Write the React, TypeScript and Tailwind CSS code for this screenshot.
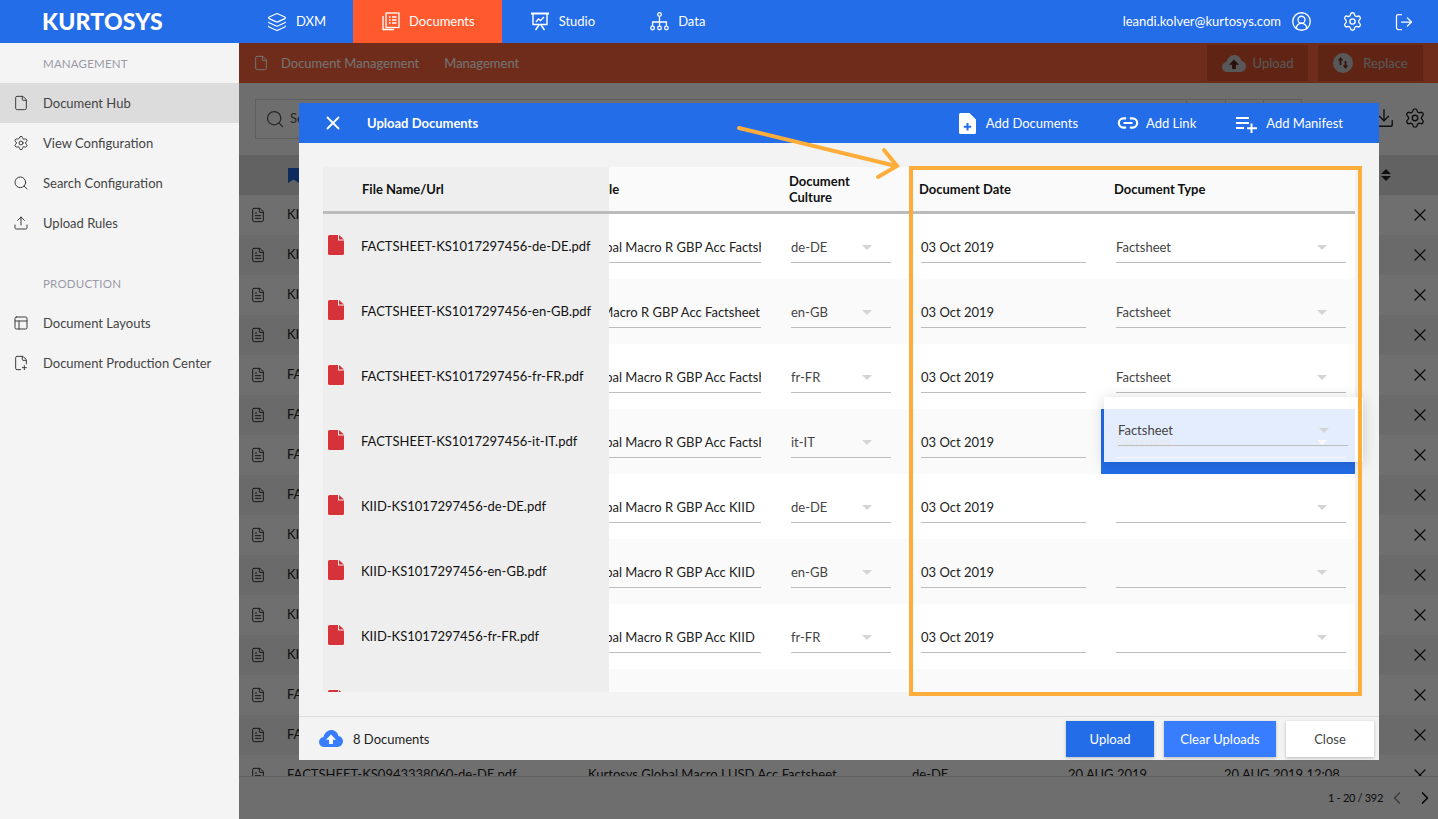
import {
  ChevronLeft,
  ChevronRight,
  CircleUserRound,
  Download,
  File,
  FilePlus2,
  FileText,
  Layers,
  Link2,
  LogOut,
  PanelsTopLeft,
  Search,
  Settings,
  Upload,
  X,
} from "lucide-react";

type DocRow = {
  file: string;
  title: string;
  titleClass: string;
  culture: string;
  type: string;
};

const docs: DocRow[] = [
  { file: "FACTSHEET-KS1017297456-de-DE.pdf", title: "Kurtosys Global Macro R GBP Acc Factsheet", titleClass: "-ml-[77px]", culture: "de-DE", type: "Factsheet" },
  { file: "FACTSHEET-KS1017297456-en-GB.pdf", title: "Kurtosys Global Macro R GBP Acc Factsheet", titleClass: "-ml-[101px]", culture: "en-GB", type: "Factsheet" },
  { file: "FACTSHEET-KS1017297456-fr-FR.pdf", title: "Kurtosys Global Macro R GBP Acc Factsheet", titleClass: "-ml-[77px]", culture: "fr-FR", type: "Factsheet" },
  { file: "FACTSHEET-KS1017297456-it-IT.pdf", title: "Kurtosys Global Macro R GBP Acc Factsheet", titleClass: "-ml-[77px]", culture: "it-IT", type: "Factsheet" },
  { file: "KIID-KS1017297456-de-DE.pdf", title: "Kurtosys Global Macro R GBP Acc KIID", titleClass: "-ml-[77px]", culture: "de-DE", type: "" },
  { file: "KIID-KS1017297456-en-GB.pdf", title: "Kurtosys Global Macro R GBP Acc KIID", titleClass: "-ml-[77px]", culture: "en-GB", type: "" },
  { file: "KIID-KS1017297456-fr-FR.pdf", title: "Kurtosys Global Macro R GBP Acc KIID", titleClass: "-ml-[77px]", culture: "fr-FR", type: "" },
  { file: "KIID-KS1017297456-it-IT.pdf", title: "Kurtosys Global Macro R GBP Acc KIID", titleClass: "-ml-[77px]", culture: "it-IT", type: "" },
];

const backgroundRows = [
  "KIID-KS0943338060-de-DE.pdf",
  "KIID-KS0943338060-en-GB.pdf",
  "KIID-KS0943338060-fr-FR.pdf",
  "KIID-KS0943338060-it-IT.pdf",
  "FACTSHEET-KS0943338061-de-DE.pdf",
  "FACTSHEET-KS0943338061-en-GB.pdf",
  "FACTSHEET-KS0943338061-fr-FR.pdf",
  "FACTSHEET-KS0943338061-it-IT.pdf",
  "KIID-KS0943338061-de-DE.pdf",
  "KIID-KS0943338061-en-GB.pdf",
  "KIID-KS0943338061-fr-FR.pdf",
  "KIID-KS0943338061-it-IT.pdf",
  "FACTSHEET-KS0943338060-it-IT.pdf",
  "FACTSHEET-KS0943338060-fr-FR.pdf",
  "FACTSHEET-KS0943338060-de-DE.pdf",
];

function DocumentsIcon() {
  return (
    <svg width="18" height="19" viewBox="0 0 18 19" fill="none" stroke="white" strokeWidth="1.3">
      <path d="M1 4v13.5h11" />
      <rect x="4" y="1" width="13" height="14.5" />
      <path d="M7 5h1.5M10 5h4.5M7 8h1.5M10 8h4.5M7 11h1.5M10 11h4.5" />
    </svg>
  );
}

function StudioIcon() {
  return (
    <svg width="20" height="19" viewBox="0 0 20 19" fill="none" stroke="white" strokeWidth="1.4">
      <path d="M1 1.500h18" strokeWidth="2" />
      <path d="M3 2v10.500h14V2" />
      <path d="M6 10l2.500-3 2 1.500L14 5" />
      <path d="M9 13l-3.500 5M11 13l3.500 5" />
    </svg>
  );
}

function DataIcon() {
  return (
    <svg width="19" height="19" viewBox="0 0 19 19" fill="none" stroke="white" strokeWidth="1.3">
      <circle cx="9.500" cy="2.500" r="1.800" />
      <circle cx="2.600" cy="16" r="1.800" />
      <circle cx="9.500" cy="16" r="1.800" />
      <circle cx="16.400" cy="16" r="1.800" />
      <path d="M9.500 4.500v9.500M2.600 14v-4h13.800v4" />
    </svg>
  );
}

function CloudIcon({ className, arrow }: { className: string; arrow: string }) {
  return (
    <svg width="24" height="17" viewBox="0 0 24 17" className={className}>
      <path
        d="M5.500 17C2.400 17 0 14.800 0 12c0-2.500 1.900-4.600 4.500-5C5.500 3 8.600 0 12.300 0c3.500 0 6.400 2.500 7.100 5.900 2.600.3 4.600 2.500 4.600 5.200 0 3.300-2.500 5.900-5.600 5.900z"
        fill="currentColor"
      />
      <path d="M12 4.500l-5 5.200h3.100V14h3.800V9.700H17z" fill={arrow} />
    </svg>
  );
}

function ReplaceIcon() {
  return (
    <svg width="20" height="20" viewBox="0 0 20 20">
      <circle cx="10" cy="10" r="10" fill="currentColor" />
      <path d="M7.500 4L4.800 7.500h1.800V12h1.800V7.500h1.800zM12.500 16l2.700-3.500h-1.800V8h-1.800v4.500H9.800z" fill="#6e2c1c" />
    </svg>
  );
}

function PdfIcon() {
  return (
    <svg width="16" height="20" viewBox="0 0 16 20" className="shrink-0">
      <path d="M1.500 0H10v5.500h6V18.500A1.500 1.500 0 0 1 14.500 20h-13A1.500 1.500 0 0 1 0 18.500v-17A1.500 1.500 0 0 1 1.500 0z" fill="#d6323a" />
      <path d="M11 0l5 4.500h-5z" fill="#d6323a" />
    </svg>
  );
}

function AddDocumentIcon() {
  return (
    <svg width="17" height="21" viewBox="0 0 17 21">
      <path d="M1.500 0H10.500L17 6.500V19.500A1.500 1.500 0 0 1 15.500 21h-14A1.500 1.500 0 0 1 0 19.500v-18A1.500 1.500 0 0 1 1.500 0z" fill="white" />
      <path d="M8.500 10v7.500M4.800 13.800h7.400" stroke="#236de8" strokeWidth="2" />
    </svg>
  );
}

function AddManifestIcon() {
  return (
    <svg width="21" height="17" viewBox="0 0 21 17" fill="none" stroke="white" strokeWidth="2">
      <path d="M0 2h13M0 7h13M0 12h8" />
      <path d="M15.500 7.500V17M11 12.200h10" />
    </svg>
  );
}

function Triangle({ className }: { className: string }) {
  return <div className={`h-0 w-0 border-x-[5px] border-t-[5px] border-x-transparent ${className}`} />;
}

function Field({ value, width, triangle = false }: { value: string; width: string; triangle?: boolean }) {
  return (
    <div className={`flex h-[32px] items-center justify-between border-b border-[#bdbdbd] pt-[2px] text-[13px] text-[#444] ${width}`}>
      <span>{value}</span>
      {triangle && <Triangle className="mr-[19px] border-t-[#d4d4d4]" />}
    </div>
  );
}

function NavTab({ icon, label, active = false }: { icon: React.ReactNode; label: string; active?: boolean }) {
  return (
    <div className={`flex h-[43px] items-center gap-[9px] pr-[27px] text-[13px] text-white ${active ? "bg-[#ff5a2e] pl-[29px]" : "pl-[28px]"}`}>
      {icon}
      <span>{label}</span>
    </div>
  );
}

function SideItem({ icon, label, active = false }: { icon: React.ReactNode; label: string; active?: boolean }) {
  return (
    <div className={`flex h-[40px] items-center text-[13px] text-[#444] ${active ? "bg-[#dcdcdc]" : ""}`}>
      <div className="flex w-[43px] justify-center pr-[1px] text-[#3c3c3c]">{icon}</div>
      <span className="pt-[2px]">{label}</span>
    </div>
  );
}

function SideHeading({ label }: { label: string }) {
  return <div className="flex h-[40px] items-center pl-[43px] pt-[2px] text-[11.5px] uppercase tracking-[0.2px] text-[#9a9aa6]">{label}</div>;
}

function Sidebar() {
  return (
    <aside className="w-[239px] shrink-0 bg-[#f4f4f4]">
      <SideHeading label="Management" />
      <SideItem active icon={<File size={16} strokeWidth={1.5} />} label="Document Hub" />
      <SideItem icon={<Settings size={16} strokeWidth={1.5} />} label="View Configuration" />
      <SideItem icon={<Search size={16} strokeWidth={1.5} />} label="Search Configuration" />
      <SideItem icon={<Upload size={16} strokeWidth={1.5} />} label="Upload Rules" />
      <div className="h-[20px]" />
      <SideHeading label="Production" />
      <SideItem icon={<PanelsTopLeft size={16} strokeWidth={1.5} />} label="Document Layouts" />
      <SideItem icon={<FilePlus2 size={16} strokeWidth={1.5} />} label="Document Production Center" />
    </aside>
  );
}

function BackgroundPage() {
  return (
    <div className="flex h-full flex-col bg-[#f4f4f4]">
      <div className="flex h-[40px] shrink-0 items-center justify-between bg-[#f9623a] pl-[14px] pr-[15px]">
        <div className="flex items-center text-[13px] text-white">
          <File size={16} strokeWidth={1.5} />
          <span className="ml-[12px] pt-[2px]">Document Management</span>
          <span className="ml-[25px] pt-[2px]">Management</span>
        </div>
        <div className="flex gap-[10px] text-[13px] text-[#c4c4c4]">
          <div className="flex h-[36px] w-[101px] items-center justify-center gap-[7px] bg-[#d6512f]">
            <CloudIcon className="text-[#c4c4c4]" arrow="#5e2518" />
            <span className="pt-[2px]">Upload</span>
          </div>
          <div className="flex h-[36px] w-[105px] items-center justify-center gap-[10px] bg-[#d6512f]">
            <ReplaceIcon />
            <span className="pt-[2px]">Replace</span>
          </div>
        </div>
      </div>
      <div className="flex h-[72px] shrink-0 items-start pl-[16px] pt-[16px]">
        <div className="flex h-[40px] w-[1047px] items-center border border-[#d0d0d0] pl-[9px] text-[13px] text-[#555]">
          <Search size={20} strokeWidth={1.5} />
          <span className="ml-[5px]">Search</span>
          <div className="ml-auto flex h-full">
            <div className="w-[39px] border-l border-[#d0d0d0]" />
            <div className="w-[38px] border-l border-[#d0d0d0]" />
            <div className="w-[38px] border-l border-[#d0d0d0]" />
          </div>
        </div>
        <div className="ml-[71px] mt-[8px] flex gap-[9px] text-[#222]">
          <Download size={22} strokeWidth={1.5} />
          <Settings size={22} strokeWidth={1.5} />
        </div>
      </div>
      <div className="flex h-[40px] shrink-0 items-center bg-[#dadada] pl-[49px]">
        <svg width="11" height="15" viewBox="0 0 11 15" fill="#1f5fd0">
          <path d="M0 0h11v15l-5.500-3.500L0 15z" />
        </svg>
        <div className="ml-auto mr-[47px] flex flex-col gap-[2px]">
          <div className="h-0 w-0 border-x-[5px] border-b-[5px] border-x-transparent border-b-[#222]" />
          <div className="h-0 w-0 border-x-[5px] border-t-[5px] border-x-transparent border-t-[#222]" />
        </div>
      </div>
      <div className="min-h-0 flex-1 overflow-hidden">
        {backgroundRows.map((name, i) => (
          <div key={i} className={`flex h-[40px] items-center text-[13px] text-[#222] ${i % 2 === 0 ? "bg-[#f6f6f6]" : "bg-[#ececec]"}`}>
            <div className="flex w-[339px] items-center pl-[11px]">
              <FileText size={16} strokeWidth={1.5} className="text-[#333]" />
              <span className="ml-[21px]">{name}</span>
            </div>
            <span className="ml-[10px] w-[324px]">Kurtosys Global Macro I USD Acc Factsheet</span>
            <span className="w-[156px]">de-DE</span>
            <span className="w-[156px]">20 AUG 2019</span>
            <span>20 AUG 2019 12:08</span>
            <X size={20} strokeWidth={1.5} className="ml-auto mr-[8px] text-[#1c1c1c]" />
          </div>
        ))}
      </div>
      <div className="flex h-[43px] shrink-0 items-center justify-end border-t border-[#d4d4d4] pr-[3px] text-[11px] tracking-[-0.3px] text-[#222]">
        <span>1 - 20 / 392</span>
        <ChevronLeft size={20} strokeWidth={2} className="ml-[4px] text-[#8a8a8a]" />
        <ChevronRight size={20} strokeWidth={2} className="ml-[8px] text-[#111]" />
      </div>
    </div>
  );
}

function UploadTable() {
  return (
    <div className="flex h-[525px] overflow-hidden bg-white">
      <div className="w-[286px] shrink-0 bg-[#eeeeee]">
        <div className="flex h-[47px] items-center border-b-[3px] border-[#bbbbbb] pl-[39px] pt-[2px] text-[13px] font-bold text-[#111]">
          File Name/Url
        </div>
        {docs.map((doc) => (
          <div key={doc.file} className="flex h-[65px] pt-[21px]">
            <div className="ml-[5px]">
              <PdfIcon />
            </div>
            <span className="ml-[17px] pt-[1px] text-[13px] leading-[20px] text-[#111]">{doc.file}</span>
          </div>
        ))}
      </div>
      <div className="min-w-0 flex-1">
        <div className="flex h-[47px] items-center border-b-[3px] border-[#bbbbbb] bg-[#fafafa] text-[13px] font-bold leading-[16px] text-[#111]">
          <div className="w-[170px]">le</div>
          <div className="w-[130px] pl-[10px]">
            Document
            <br />
            Culture
          </div>
          <div className="w-[192px] pl-[10px]">Document Date</div>
          <div className="pl-[13px]">Document Type</div>
        </div>
        {docs.map((doc, i) => (
          <div key={doc.file} className={`flex h-[65px] ${i % 2 === 1 ? "bg-[#fafafa]" : "bg-white"}`}>
            <div className="w-[170px] pt-[17px]">
              <div className="flex h-[32px] w-[152px] items-center overflow-hidden whitespace-nowrap border-b border-[#bdbdbd] pt-[2px] text-[13px] text-[#222]">
                <span className={doc.titleClass}>{doc.title}</span>
              </div>
            </div>
            <div className="w-[130px] pl-[12px] pt-[17px]">
              <Field value={doc.culture} width="w-[100px]" triangle />
            </div>
            <div className="w-[192px] pl-[12px] pt-[17px]">
              <div className="flex h-[32px] w-[165px] items-center border-b border-[#bdbdbd] pt-[2px] text-[13px] text-[#222]">03 Oct 2019</div>
            </div>
            <div className={`flex-1 pl-[15px] pt-[17px] ${i === 3 ? "bg-[#236de8]" : ""}`}>
              <Field value={doc.type} width="w-[230px]" triangle />
            </div>
          </div>
        ))}
      </div>
    </div>
  );
}

function UploadModal() {
  return (
    <div className="absolute left-[60px] top-[60px] flex h-[657px] w-[1080px] flex-col bg-[#f3f3f3]">
      <div className="flex h-[40px] shrink-0 items-center bg-[#236de8] text-[13px] text-white">
        <X size={22} strokeWidth={2} className="ml-[23px]" />
        <span className="ml-[23px] pt-[2px] font-bold">Upload Documents</span>
        <div className="ml-auto flex items-center pr-[36px]">
          <AddDocumentIcon />
          <span className="ml-[10px] pt-[2px]">Add Documents</span>
          <Link2 size={22} strokeWidth={2.4} className="ml-[39px]" />
          <span className="ml-[7px] pt-[2px]">Add Link</span>
          <div className="ml-[40px] mt-[3px]">
            <AddManifestIcon />
          </div>
          <span className="ml-[9px] pt-[2px]">Add Manifest</span>
        </div>
      </div>
      <div className="h-[574px] shrink-0 border-b border-[#dcdcdc] px-[24px] pt-[24px]">
        <UploadTable />
      </div>
      <div className="flex min-h-0 flex-1 items-center pl-[20px] pr-[5px] text-[13px]">
        <CloudIcon className="text-[#387dff]" arrow="white" />
        <span className="ml-[10px] pt-[2px] text-[#1c1c1c]">8 Documents</span>
        <div className="ml-auto flex gap-[10px]">
          <button className="h-[36px] w-[88px] bg-[#236de8] pt-[2px] text-white shadow-[0_1px_3px_rgba(0,0,0,0.25)]">Upload</button>
          <button className="h-[36px] w-[112px] bg-[#387dff] pt-[2px] text-white shadow-[0_1px_3px_rgba(0,0,0,0.25)]">Clear Uploads</button>
          <button className="h-[36px] w-[88px] bg-white pt-[2px] text-[#444] shadow-[0_1px_3px_rgba(0,0,0,0.25)]">Close</button>
        </div>
      </div>

      {/* row being dragged */}
      <div className="absolute left-[805px] top-[294px] h-[65px] w-[259px] bg-white/[0.88] pl-[14px] pt-[17px] shadow-[0_2px_14px_rgba(0,0,0,0.16)]">
        <Field value="Factsheet" width="w-[230px]" triangle />
      </div>

      {/* annotation drawn over the screenshot */}
      <div className="absolute left-[610px] top-[63px] h-[530px] w-[453px] border-[4px] border-[#ffad3a]" />
      <svg className="absolute left-[430px] top-[15px]" width="180" height="70" fill="none" stroke="#ffad3a" strokeWidth="4" strokeLinecap="round">
        <path d="M10 10L167 48" />
        <path d="M155 32L168 48L149 59" />
      </svg>
    </div>
  );
}

export default function App() {
  return (
    <div className="flex h-screen w-full flex-col overflow-hidden [font-family:Lato,sans-serif]">
      <header className="flex h-[43px] shrink-0 items-center bg-[#236de8] text-white">
        <div className="w-[239px] pl-[42px] text-[23px] font-black leading-none tracking-[0.2px]">KURTOSYS</div>
        <NavTab icon={<Layers size={20} strokeWidth={1.4} />} label="DXM" />
        <NavTab active icon={<DocumentsIcon />} label="Documents" />
        <NavTab icon={<StudioIcon />} label="Studio" />
        <NavTab icon={<DataIcon />} label="Data" />
        <div className="ml-auto flex items-center pr-[24px] text-[13px]">
          <span>leandi.kolver@kurtosys.com</span>
          <CircleUserRound size={21} strokeWidth={1.5} className="ml-[10px]" />
          <Settings size={21} strokeWidth={1.5} className="ml-[30px]" />
          <LogOut size={20} strokeWidth={1.5} className="ml-[31px]" />
        </div>
      </header>
      <div className="flex min-h-0 flex-1">
        <Sidebar />
        <main className="relative min-w-0 flex-1">
          <BackgroundPage />
          <div className="absolute inset-0 bg-black/55" />
          <UploadModal />
        </main>
      </div>
    </div>
  );
}
